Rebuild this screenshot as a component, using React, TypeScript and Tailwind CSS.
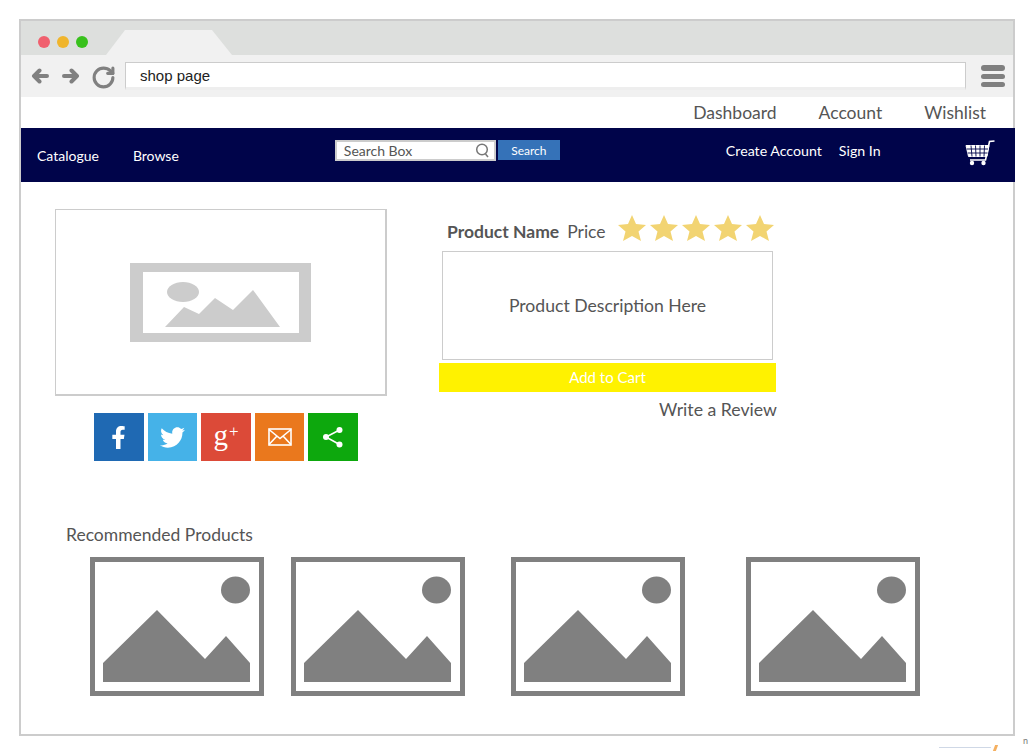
import { FaFacebookF, FaTwitter } from 'react-icons/fa';
import { RotateCw } from 'lucide-react';

const SOCIAL_GAP = 'flex h-[48px] items-center justify-center text-white';

function Star() {
  return (
    <svg width="28" height="26" viewBox="0 0 28 26">
      <polygon points="14,0 18,9 28,10 20.5,16.5 23,26 14,21 5,26 7.5,16.5 0,10 10,9" fill="#f2d472" />
    </svg>
  );
}

function Tile({ className }: { className: string }) {
  return (
    <svg className={className} width="174" height="139" viewBox="0 0 174 139">
      <rect x="2.5" y="2.5" width="169" height="134" fill="#fff" stroke="#808080" strokeWidth="5" />
      <ellipse cx="145.5" cy="33" rx="14.5" ry="13.5" fill="#808080" />
      <polygon points="13,106 67,53 115,102 136,79 160,106 160,125 13,125" fill="#808080" />
    </svg>
  );
}

function Arrow({ flip }: { flip?: boolean }) {
  return (
    <svg className={flip ? 'ml-[13px] -scale-x-100' : ''} width="18" height="16" viewBox="0 0 18 16" fill="none" stroke="#808080" strokeWidth="4" strokeLinecap="round" strokeLinejoin="round">
      <path d="M16 8 H3 M8.5 2.5 L3 8 L8.5 13.5" />
    </svg>
  );
}

function Cart() {
  return (
    <svg width="30" height="26" viewBox="0 0 30 26" fill="none" stroke="#fff">
      <path d="M29.5 1 L24.5 1.5 L20.5 20 L5 20" strokeWidth="1.6" />
      <path d="M1 5.5 H24 L22 16.5 H3.5 Z" fill="#fff" strokeWidth="1" />
      <path d="M1.5 9 H23 M2.5 13 H22.5 M6 5.5 L7 16.5 M10.5 5.5 L11 16.5 M15 5.5 V16.5 M19.5 5.5 L19 16.5" stroke="#00044a" strokeWidth="0.9" />
      <circle cx="7" cy="23" r="2.2" fill="#fff" stroke="none" />
      <circle cx="18.5" cy="23" r="2.2" fill="#fff" stroke="none" />
    </svg>
  );
}

export default function App() {
  return (
    <div className="h-[755px] w-[1035px] overflow-hidden bg-white pl-[19px] pt-[19px] font-['Lato',sans-serif] text-[#555]">
      <div className="h-[717px] w-[996px] border-2 border-[#ccc]">
        {/* Tab strip */}
        <div className="flex h-[34px] items-end bg-[#dddfdd]">
          <div className="mb-[7px] ml-[17px] flex gap-[7px] self-end">
            <span className="h-[12px] w-[12px] rounded-full bg-[#f0606e]" />
            <span className="h-[12px] w-[12px] rounded-full bg-[#f0b52c]" />
            <span className="h-[12px] w-[12px] rounded-full bg-[#38c11c]" />
          </div>
          <svg className="ml-[18px]" width="127" height="25" viewBox="0 0 127 25">
            <polygon points="0,25 19,0 106,0 126,25" fill="#f1f1f1" />
          </svg>
        </div>

        {/* Address row */}
        <div className="flex h-[42px] items-center bg-[#f1f1f1] pl-[10px]">
          <Arrow />
          <Arrow flip />
          <RotateCw className="ml-[11px] mt-[2px] text-[#808080]" size={25} strokeWidth={3} />
          <div className="ml-[9px] flex h-[28px] w-[841px] items-center border border-b-[3px] border-[#ccc] border-b-[#eee] bg-white pl-[14px] pt-[2px] font-['Liberation_Sans',sans-serif] text-[15px] text-[#222]">
            shop page
          </div>
          <div className="ml-[15px] flex w-[24px] flex-col gap-[3px]">
            <span className="h-[6px] rounded-full bg-[#808080]" />
            <span className="h-[5px] rounded-full bg-[#808080]" />
            <span className="h-[5px] rounded-full bg-[#808080]" />
          </div>
        </div>

        {/* Top links */}
        <div className="flex h-[31px] items-center justify-end pr-[27px] pt-[2px] text-[17.5px]">
          <span>Dashboard</span>
          <span className="ml-[42px]">Account</span>
          <span className="ml-[42px]">Wishlist</span>
        </div>

        {/* Navy bar */}
        <div className="flex h-[54px] w-[994px] items-start bg-[#00044a] text-white">
          <span className="ml-[16px] mt-[19px] text-[14px] leading-[18px]">Catalogue</span>
          <span className="ml-[34px] mt-[19px] text-[14px] leading-[18px]">Browse</span>
          <div className="ml-[156px] mt-[12px] flex h-[21px] w-[161px] items-center justify-between border-2 border-[#ccc] bg-white pl-[7px] pr-[4px] text-[14px] text-[#555]">
            <span>Search Box</span>
            <svg width="15" height="15" viewBox="0 0 15 15" fill="none" stroke="#777" strokeWidth="1.5">
              <circle cx="7" cy="6.5" r="5.3" />
              <path d="M10.5 11 L13 14" />
            </svg>
          </div>
          <div className="ml-[2px] mt-[12px] flex h-[20px] w-[62px] items-center justify-center bg-[#3572b8] pt-[1px] text-[12px]">
            Search
          </div>
          <span className="ml-[166px] mt-[14px] text-[14.2px] leading-[18px]">Create Account</span>
          <span className="ml-[17px] mt-[14px] text-[14.2px] leading-[18px]">Sign In</span>
          <div className="ml-[84px] mt-[12px]">
            <Cart />
          </div>
        </div>

        {/* Product */}
        <div className="flex pl-[34px] pt-[27px]">
          <div className="w-[332px]">
            <div className="flex h-[187px] items-center justify-center border-2 border-[#ccc] border-l-[1px] border-t-[1px]">
              <svg className="ml-[0px] mt-[1px]" width="181" height="79" viewBox="0 0 181 79">
                <path fillRule="evenodd" d="M0 0H181V79H0Z M13 9V70H169V9Z" fill="#ccc" />
                <ellipse cx="53" cy="29" rx="16" ry="10" fill="#ccc" />
                <polygon points="35,64 54,44 69,51 85,35 103,47 123,27 150,64" fill="#ccc" />
              </svg>
            </div>
            <div className="ml-[39px] mt-[17px] flex gap-[4px]">
              <div className={`${SOCIAL_GAP} w-[50px] bg-[#1f69b3]`}>
                <FaFacebookF className="mr-[2px] text-[23px]" />
              </div>
              <div className={`${SOCIAL_GAP} w-[49px] bg-[#45b2e8]`}>
                <FaTwitter className="text-[25px]" />
              </div>
              <div className={`${SOCIAL_GAP} w-[50px] bg-[#dc4a38] font-['Liberation_Serif',serif]`}>
                <span className="mt-[-4px] text-[29px] leading-none">g</span>
                <span className="mb-[12px] ml-[1px] text-[17px] leading-none">+</span>
              </div>
              <div className={`${SOCIAL_GAP} w-[49px] bg-[#ea781d]`}>
                <svg width="24" height="18" viewBox="0 0 24 18" fill="none" stroke="#fff" strokeWidth="1.6">
                  <rect x="1" y="1" width="22" height="16" />
                  <path d="M1 1.5 L12 10.5 L23 1.5 M1 16.5 L9 8 M23 16.5 L15 8" />
                </svg>
              </div>
              <div className={`${SOCIAL_GAP} w-[50px] bg-[#0da80d]`}>
                <svg width="22" height="22" viewBox="0 0 22 22" fill="#fff" stroke="#fff" strokeWidth="1.6">
                  <circle cx="17.5" cy="4" r="3" stroke="none" />
                  <circle cx="4" cy="11" r="3" stroke="none" />
                  <circle cx="17.5" cy="18.5" r="3" stroke="none" />
                  <path d="M17.5 4 L4 11 L17.5 18.5" fill="none" />
                </svg>
              </div>
            </div>
          </div>

          <div className="ml-[52px] w-[338px]">
            <div className="flex h-[42px] items-start">
              <span className="ml-[8px] mt-[12px] text-[17.5px] font-bold leading-[22px]">Product Name</span>
              <span className="ml-[8px] mt-[12px] text-[17.5px] leading-[22px]">Price</span>
              <div className="ml-[12px] mt-[6px] flex gap-[4px]">
                <Star />
                <Star />
                <Star />
                <Star />
                <Star />
              </div>
            </div>
            <div className="ml-[3px] flex h-[109px] w-[331px] items-center justify-center border border-[#ccc] pt-[2px] text-[17.6px]">
              Product Description Here
            </div>
            <div className="mt-[3px] flex h-[29px] w-[337px] items-center justify-center bg-[#fff200] text-[15px] text-white">
              Add to Cart
            </div>
            <div className="mt-[7px] text-right text-[17.7px] leading-[22px]">Write a Review</div>
          </div>
        </div>

        {/* Recommended */}
        <div className="ml-[45px] mt-[63px] text-[17.5px] leading-[22px]">Recommended Products</div>
        <div className="ml-[69px] mt-[11px] flex">
          <Tile className="" />
          <Tile className="ml-[27px]" />
          <Tile className="ml-[46px]" />
          <Tile className="ml-[61px]" />
        </div>
      </div>

      {/* Cut-off artefacts below the frame */}
      <div className="flex h-[19px] items-start">
        <div className="ml-[920px] mt-[11px] h-[1px] w-[52px] bg-[#cfd8e6]" />
        <div className="ml-[3px] mt-[9px] h-[6px] w-[3px] skew-x-[-20deg] bg-[#f5b060]" />
        <span className="ml-[26px] mt-[0px] text-[9px] leading-[10px] text-[#777]">n</span>
      </div>
    </div>
  );
}
